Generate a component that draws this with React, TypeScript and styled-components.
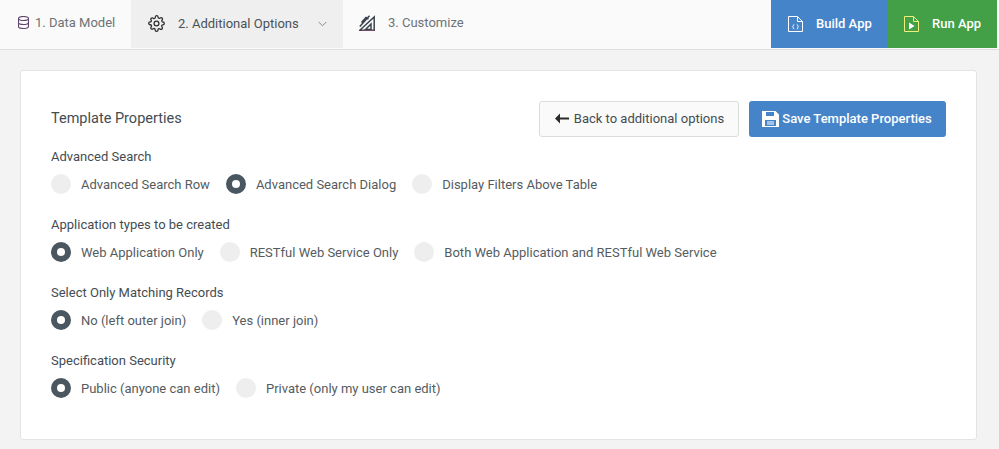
import styled, { createGlobalStyle } from "styled-components";

const GlobalStyle = createGlobalStyle`
  html, body {
    margin: 0;
    padding: 0;
    background: #f3f3f3;
    font-family: Roboto, "Liberation Sans", sans-serif;
    color: #444c52;
  }
  * { box-sizing: border-box; }
`;

const Page = styled.div`
  width: 999px;
  height: 449px;
  overflow: hidden;
`;

const TopBar = styled.header`
  height: 50px;
  display: flex;
  justify-content: space-between;
  align-items: flex-start;
  padding-right: 2px;
  background: #fafafa;
  border-bottom: 1px solid #dedede;
`;

const Steps = styled.nav`
  display: flex;
`;

const Step = styled.div<{ $active?: boolean; $width: number; $gap: number; $left: number }>`
  width: ${(p) => p.$width}px;
  height: 48px;
  padding-left: ${(p) => p.$left}px;
  padding-bottom: ${(p) => (p.$active ? 1 : 3)}px;
  display: flex;
  align-items: center;
  gap: ${(p) => p.$gap}px;
  font-size: 13px;
  white-space: nowrap;
  background: ${(p) => (p.$active ? "#efefef" : "transparent")};
  color: ${(p) => (p.$active ? "#4a5257" : "#6d7378")};
`;

const Chevron = styled.svg`
  margin-left: 6px;
`;

const Actions = styled.div`
  display: flex;
`;

const ActionButton = styled.button<{ $bg: string; $width: number; $left: number }>`
  width: ${(p) => p.$width}px;
  height: 48px;
  border: 0;
  padding: 0 0 1px ${(p) => p.$left}px;
  display: flex;
  align-items: center;
  gap: 13px;
  background: ${(p) => p.$bg};
  color: #fff;
  font: 500 13px Roboto, sans-serif;
`;

const Main = styled.main`
  padding: 20px 22px 0 20px;
`;

const Card = styled.section`
  height: 370px;
  background: #fff;
  border: 1px solid #e3e3e3;
  border-radius: 3px;
  padding: 30px 30px 0;
`;

const CardHeader = styled.div`
  height: 36px;
  display: flex;
  align-items: center;
  gap: 10px;
`;

const CardTitle = styled.h2`
  flex: 1;
  margin: 0 0 2px;
  font-size: 14.5px;
  font-weight: 400;
  color: #444c52;
`;

const BackButton = styled.button`
  height: 36px;
  width: 200px;
  padding: 0 0 1px 1px;
  border: 1px solid #dcdcdc;
  border-radius: 3px;
  background: #fafafa;
  color: #444c52;
  display: flex;
  align-items: center;
  justify-content: center;
  gap: 5px;
  font: 400 13px Roboto, sans-serif;
`;

const SaveButton = styled.button`
  height: 36px;
  width: 197px;
  padding: 0 1px 1px 0;
  border: 0;
  border-radius: 3px;
  background: #4684ca;
  color: #fff;
  display: flex;
  align-items: center;
  justify-content: center;
  gap: 3px;
  font: 500 13px Roboto, sans-serif;
`;

const Group = styled.div`
  margin-top: 12px;
  height: 56px;
  &:first-of-type {
    margin-top: 14px;
  }
`;

const GroupLabel = styled.div`
  font-size: 13px;
  line-height: 15px;
  color: #444c52;
`;

const Options = styled.div`
  margin-top: 10px;
  display: flex;
  gap: 16px;
`;

const Option = styled.label`
  display: flex;
  align-items: center;
  gap: 10px;
  font-size: 13px;
  height: 20px;
  color: #555c61;
`;

const Radio = styled.span<{ $on?: boolean }>`
  width: 20px;
  height: 20px;
  border-radius: 50%;
  background: ${(p) => (p.$on ? "#4a5760" : "#eeeeee")};
  display: flex;
  align-items: center;
  justify-content: center;
  &::after {
    content: "";
    width: 8px;
    height: 8px;
    border-radius: 50%;
    background: ${(p) => (p.$on ? "#fff" : "transparent")};
  }
`;

const groups = [
  { label: "Advanced Search", options: [["Advanced Search Row", false], ["Advanced Search Dialog", true], ["Display Filters Above Table", false]] },
  { label: "Application types to be created", options: [["Web Application Only", true], ["RESTful Web Service Only", false], ["Both Web Application and RESTful Web Service", false]] },
  { label: "Select Only Matching Records", options: [["No (left outer join)", true], ["Yes (inner join)", false]] },
  { label: "Specification Security", options: [["Public (anyone can edit)", true], ["Private (only my user can edit)", false]] },
] as { label: string; options: [string, boolean][] }[];

function App() {
  return (
    <Page>
      <GlobalStyle />
      <TopBar>
        <Steps>
          <Step $width={131} $gap={6} $left={18}>
            <svg width="11" height="13" viewBox="0 0 11 13" fill="none" stroke="#5f4468" strokeWidth="1.1">
              <ellipse cx="5.5" cy="2.5" rx="5" ry="2" />
              <path d="M.5 2.5v8c0 1.1 2.2 2 5 2s5-.9 5-2v-8M.5 6.500c0 1.100 2.200 2 5 2s5-.9 5-2" />
            </svg>
            1. Data Model
          </Step>
          <Step $active $width={212} $gap={13} $left={17}>
            <svg width="17" height="17" viewBox="0 0 24 24" fill="none" stroke="#2f2f2f" strokeWidth="1.8">
              <circle cx="12" cy="12" r="3.4" />
              <path d="M19.4 15a1.65 1.65 0 0 0 .33 1.82l.06.06a2 2 0 1 1-2.83 2.83l-.06-.06a1.65 1.65 0 0 0-2.8 1.17V21a2 2 0 1 1-4 0v-.09A1.65 1.65 0 0 0 7.4 19.4l-.06.06a2 2 0 1 1-2.83-2.83l.06-.06a1.65 1.65 0 0 0-1.17-2.8H3a2 2 0 1 1 0-4h.09A1.65 1.65 0 0 0 4.6 7.4l-.06-.06a2 2 0 1 1 2.83-2.83l.06.06a1.65 1.65 0 0 0 2.8-1.17V3a2 2 0 1 1 4 0v.09a1.65 1.65 0 0 0 2.8 1.17l.06-.06a2 2 0 1 1 2.83 2.83l-.06.06a1.65 1.65 0 0 0 1.17 2.8H21a2 2 0 1 1 0 4h-.09a1.65 1.65 0 0 0-1.51 1z" />
            </svg>
            2. Additional Options
            <Chevron width="9" height="6" viewBox="0 0 9 6" fill="none" stroke="#888" strokeWidth="1">
              <path d="M.7 1l3.800 3.800L8.300 1" />
            </Chevron>
          </Step>
          <Step $width={140} $gap={13} $left={16}>
            <svg width="16" height="16" viewBox="0 0 16 16" fill="none" stroke="#3a4350" strokeWidth="1.5">
              <path d="M.8 15.200L15.200 2v13.200z" />
              <path d="M6.500 14.500l5.500-5.500v5.500zM.8 11.500L10.500.8M2.500 7.500l4.500-5 2.500 1.500" />
              <path d="M3 15.500h12" stroke="#7a4a60" strokeWidth="1" />
            </svg>
            3. Customize
          </Step>
        </Steps>
        <Actions>
          <ActionButton $bg="#4684ca" $width={117} $left={17}>
            <svg width="15" height="16" viewBox="0 0 15 16" fill="none" stroke="#fff" strokeWidth="1">
              <path d="M.5.5h9l5 5v10H.5zM9.5.5v5h5" />
              <path d="M6.200 8.500c-1.200 0-.8 2-1.600 2.300.8.3.4 2.300 1.600 2.300M8.800 8.500c1.200 0 .8 2 1.600 2.300-.8.3-.4 2.300-1.600 2.300" />
            </svg>
            Build App
          </ActionButton>
          <ActionButton $bg="#43a047" $width={109} $left={16}>
            <svg width="15" height="16" viewBox="0 0 15 16" fill="none" stroke="#efef7a" strokeWidth="1">
              <path d="M.5.5h9l5 5v10H.5zM9.500.5v5h5" />
              <path d="M5 6.500l5.500 3.500L5 13.500z" fill="#fff" stroke="none" />
            </svg>
            Run App
          </ActionButton>
        </Actions>
      </TopBar>
      <Main>
        <Card>
          <CardHeader>
            <CardTitle>Template Properties</CardTitle>
            <BackButton>
              <svg width="14" height="11" viewBox="0 0 14 11" fill="#2b2b2b">
                <path d="M0 5.500L5 .5v4h9v2H5v4z" />
              </svg>
              Back to additional options
            </BackButton>
            <SaveButton>
              <svg width="17" height="16" viewBox="0 0 17 16" fill="#fff">
                <path d="M0 0h13.500L17 3.500V16H0zM4 1v4h8V1zM3 9v6h11V9zM5 10.500h7v1H5zM5 12.500h7v1H5z" fillRule="evenodd" />
              </svg>
              Save Template Properties
            </SaveButton>
          </CardHeader>
          {groups.map((group) => (
            <Group key={group.label}>
              <GroupLabel>{group.label}</GroupLabel>
              <Options>
                {group.options.map(([text, on]) => (
                  <Option key={text}>
                    <Radio $on={on} />
                    {text}
                  </Option>
                ))}
              </Options>
            </Group>
          ))}
        </Card>
      </Main>
    </Page>
  );
}

export default App;
